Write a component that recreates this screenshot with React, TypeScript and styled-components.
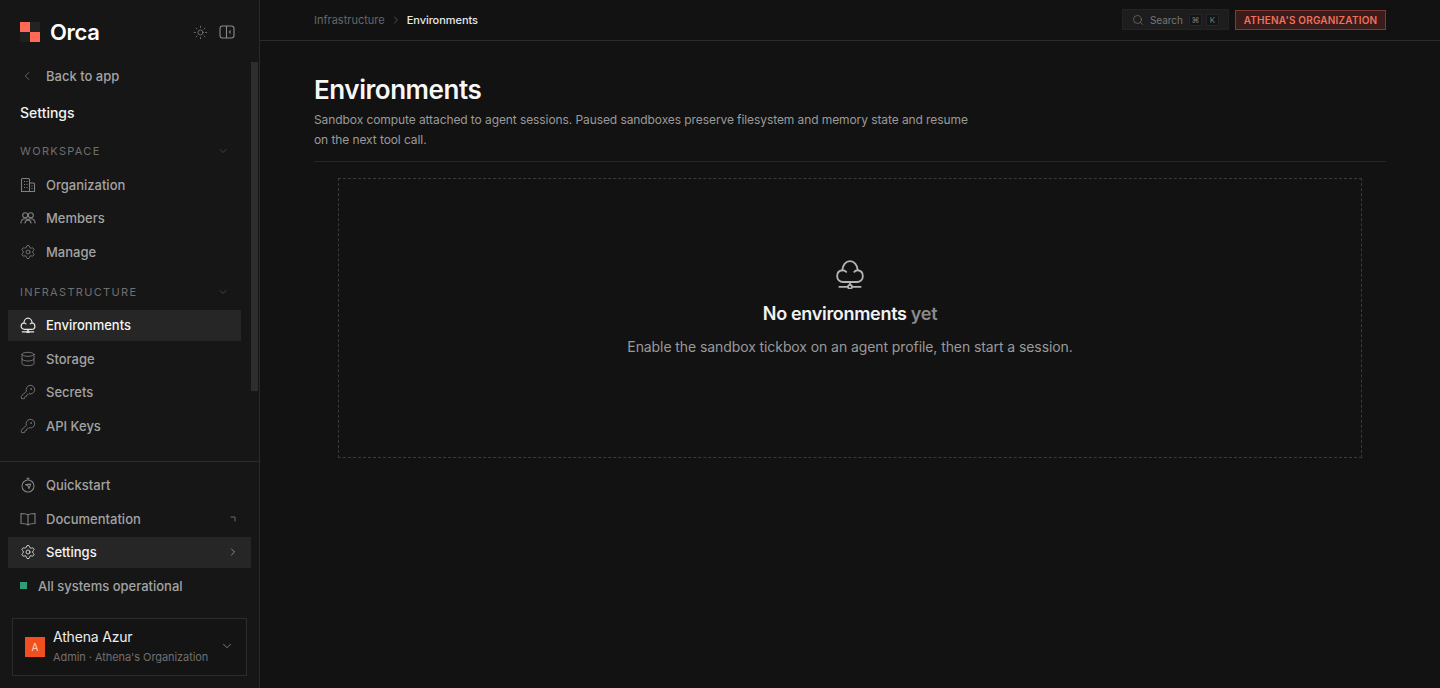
import React from 'react';
import styled, { createGlobalStyle } from 'styled-components';
import {
  ChevronDown,
  ChevronLeft,
  ChevronRight,
  Database,
  KeyRound,
  Search,
  Settings,
  Sun,
} from 'lucide-react';

const GlobalStyle = createGlobalStyle`
  html, body {
    margin: 0;
    padding: 0;
    height: 100%;
    background: #121212;
  }
  * {
    box-sizing: border-box;
  }
  body {
    font-family: Inter, "Liberation Sans", sans-serif;
    color: #fff;
    overflow: hidden;
  }
`;

const Page = styled.div`
  display: flex;
  width: 1440px;
  height: 688px;
  background: #121212;
`;

const Sidebar = styled.aside`
  position: relative;
  flex: 0 0 260px;
  height: 688px;
  display: flex;
  flex-direction: column;
  background: #161616;
  border-right: 1px solid #2a2a2a;
`;

const Scrollbar = styled.div`
  position: absolute;
  top: 62px;
  left: 251px;
  width: 7px;
  height: 329px;
  background: #2e2e2e;
`;

const BrandRow = styled.div`
  display: flex;
  align-items: center;
  height: 62px;
  padding: 2px 24px 0 20px;
`;

const BrandName = styled.span`
  margin-left: 10px;
  font-size: 22px;
  font-weight: 600;
  letter-spacing: -0.35px;
  color: #fff;
  flex: 1;
`;

const HeadIcons = styled.div`
  display: flex;
  align-items: center;
  gap: 11px;
  color: #8a8a8a;
`;

const TopNav = styled.div`
  flex: 1;
  display: flex;
  flex-direction: column;
`;

const BackRow = styled.div`
  display: flex;
  align-items: center;
  height: 28px;
  padding-left: 20px;
  gap: 12px;
  font-size: 13px;
  font-weight: 500;
  color: #a3a3a3;
  svg {
    color: #808080;
  }
`;

const SettingsTitle = styled.div`
  margin-top: 13px;
  padding-left: 20px;
  height: 20px;
  line-height: 20px;
  font-size: 14px;
  font-weight: 500;
  color: #f2f2f2;
`;

const SectionHead = styled.div<{ $top: number }>`
  display: flex;
  align-items: center;
  justify-content: space-between;
  height: 20px;
  width: 241px;
  margin-top: ${(p) => p.$top}px;
  margin-bottom: 8px;
  padding: 0 12px 0 20px;
  font-size: 11px;
  font-weight: 400;
  letter-spacing: 1.32px;
  color: #6f6f6f;
  svg {
    color: #5a5a5a;
  }
`;

const NavItem = styled.div<{ $active?: boolean; $wide?: boolean }>`
  display: flex;
  align-items: center;
  gap: 10px;
  width: ${(p) => (p.$wide ? 243 : 233)}px;
  height: 31px;
  margin: 0 0 2.5px 8px;
  padding: 0 12px;
  font-size: 13px;
  font-weight: 500;
  color: ${(p) => (p.$active ? '#f5f5f5' : '#a3a3a3')};
  background: ${(p) => (p.$active ? '#262626' : 'transparent')};
  svg.lead {
    flex: 0 0 16px;
    color: ${(p) => (p.$active ? '#e6e6e6' : '#808080')};
  }
`;

const ItemLabel = styled.span`
  flex: 1;
`;

const ExternalWrap = styled.span`
  display: flex;
  margin-right: 3px;
`;

const BottomNav = styled.div`
  border-top: 1px solid #2a2a2a;
  padding-top: 8px;
`;

const StatusRow = styled.div`
  display: flex;
  align-items: center;
  gap: 11px;
  height: 31px;
  padding-left: 20px;
  font-size: 13px;
  font-weight: 500;
  color: #a3a3a3;
`;

const StatusDot = styled.span`
  width: 7px;
  height: 7px;
  background: #2f9e78;
`;

const UserCard = styled.div`
  display: flex;
  align-items: center;
  width: 235px;
  height: 58px;
  margin: 17px 0 12px 12px;
  padding: 0 12px 2px 12px;
  border: 1px solid #2c2c2c;
  background: #141414;
`;

const Avatar = styled.div`
  display: flex;
  align-items: center;
  justify-content: center;
  flex: 0 0 20px;
  height: 20px;
  margin-top: 2px;
  background: #f0501f;
  font-size: 10px;
  color: #ffd9cc;
`;

const UserText = styled.div`
  flex: 1;
  margin-left: 8px;
  display: flex;
  flex-direction: column;
  gap: 5px;
`;

const UserName = styled.div`
  font-size: 14px;
  line-height: 17px;
  letter-spacing: -0.18px;
  color: #ededed;
`;

const UserMeta = styled.div`
  font-size: 11px;
  line-height: 14px;
  letter-spacing: -0.07px;
  color: #6f6f6f;
`;

const Main = styled.main`
  flex: 1;
  display: flex;
  flex-direction: column;
`;

const TopBar = styled.header`
  display: flex;
  align-items: center;
  height: 41px;
  padding: 0 54px;
  border-bottom: 1px solid #2a2a2a;
`;

const Crumbs = styled.div`
  flex: 1;
  display: flex;
  align-items: center;
  gap: 5px;
  font-size: 11px;
  color: #666;
  svg {
    color: #777;
  }
`;

const CrumbCurrent = styled.span`
  font-weight: 500;
  letter-spacing: -0.05px;
  color: #e8e8e8;
`;

const SearchBox = styled.div`
  display: flex;
  align-items: center;
  width: 107px;
  height: 21px;
  margin-bottom: 1px;
  padding: 0 9px 0 9px;
  background: #1d1d1d;
  border: 1px solid #232323;
  font-size: 10px;
  letter-spacing: -0.05px;
  color: #777;
  svg {
    color: #808080;
    margin-right: 6px;
  }
`;

const SearchLabel = styled.span`
  flex: 1;
`;

const Kbd = styled.span`
  display: flex;
  align-items: center;
  justify-content: center;
  width: 13px;
  height: 12px;
  margin-left: 4px;
  background: #141414;
  border: 1px solid #262626;
  font-size: 8px;
  color: #777;
`;

const OrgBadge = styled.div`
  display: flex;
  align-items: center;
  justify-content: center;
  width: 151px;
  height: 20px;
  margin-left: 6px;
  background: #3a1c1a;
  border: 1px solid #7e3b33;
  font-size: 10px;
  font-weight: 600;
  letter-spacing: 0.2px;
  color: #f0705c;
`;

const Content = styled.div`
  padding: 31px 54px 0;
`;

const PageHead = styled.div`
  padding-bottom: 12px;
  border-bottom: 1px solid #262626;
`;

const PageTitle = styled.h1`
  margin: 0;
  font-size: 26px;
  line-height: 36px;
  font-weight: 600;
  letter-spacing: -0.45px;
  color: #f7f7f7;
`;

const PageDesc = styled.p`
  margin: 2px 0 0;
  max-width: 670px;
  font-size: 12px;
  line-height: 19.5px;
  letter-spacing: -0.086px;
  color: #9a9a9a;
`;

const EmptyBox = styled.div`
  display: flex;
  flex-direction: column;
  align-items: center;
  width: 1024px;
  height: 280px;
  margin: 16px 0 0 24px;
  padding-top: 80px;
  border: 1px dashed #3a3a3a;
`;

const EmptyIcon = styled.div`
  display: flex;
  color: #b4b4b4;
`;

const EmptyTitle = styled.div`
  margin-top: 13px;
  font-size: 18px;
  line-height: 24px;
  font-weight: 600;
  letter-spacing: -0.31px;
  color: #f2f2f2;
`;

const Muted = styled.span`
  color: #8a8a8a;
`;

const EmptyText = styled.div`
  margin-top: 11px;
  font-size: 14px;
  line-height: 20px;
  letter-spacing: -0.086px;
  color: #9a9a9a;
`;

const Logo = () => (
  <svg width="20" height="20" viewBox="0 0 20 20">
    <rect x="0" y="0" width="10" height="10" fill="#ff6a55" />
    <rect x="10" y="0" width="10" height="10" fill="#232323" />
    <rect x="0" y="10" width="10" height="10" fill="#1f1f1f" />
    <rect x="10" y="10" width="10" height="10" fill="#ff6a55" />
  </svg>
);

const PanelIcon = () => (
  <svg width="16" height="16" viewBox="0 0 16 16" fill="none" stroke="currentColor" strokeWidth="1.1">
    <rect x="1" y="2" width="14" height="12" rx="2.5" />
    <path d="M7.500 2v12M11.500 6.500 10.500 8l1 1.500" />
  </svg>
);

const CloudIcon = ({ size = 16, width = 2.100 }: { size?: number; width?: number }) => (
  <svg className="lead" width={size} height={size} viewBox="0 0 28 28" fill="none" stroke="currentColor" strokeWidth={width} strokeLinecap="round" strokeLinejoin="round">
    <path d="M7.500 21.500C4.400 21.500 2 19 2 16C2 13 4 10.800 6.800 10.500C7 5.800 10 2 14 2C18 2 21 5.800 21.200 10.500C24 10.800 26 13 26 16C26 19 23.600 21.500 20.500 21.500Z" />
    <path d="M6.800 10.500C8.200 10.500 9.500 11 10.500 12M21.200 10.500C19.800 10.500 18.800 11 18 12" />
    <circle cx="14" cy="26" r="1.800" />
    <path d="M14 21.500v2.700M4 26h8.200M15.800 26H24" />
  </svg>
);

const BuildingIcon = () => (
  <svg className="lead" width="16" height="16" viewBox="0 0 16 16" fill="none" stroke="currentColor" strokeWidth="1.1">
    <path d="M1.500 14.500V2.500a1 1 0 0 1 1-1h6a1 1 0 0 1 1 1v12zM9.500 6h4a1 1 0 0 1 1 1v7.500h-5" />
    <path d="M4 4.500h1M6.500 4.500h1M4 7.500h1M6.500 7.500h1M4 10.500h1M6.500 10.500h1M11.500 9h1M11.500 11.500h1" />
  </svg>
);

const MembersIcon = () => (
  <svg className="lead" width="16" height="16" viewBox="0 0 16 16" fill="none" stroke="currentColor" strokeWidth="1.1" strokeLinecap="round">
    <circle cx="5.200" cy="5.200" r="2.500" />
    <circle cx="10.800" cy="5.200" r="2.500" />
    <path d="M1 13c0-2.600 1.600-4.300 4.200-4.300 1.200 0 2.200.4 2.800 1.100.6-.7 1.600-1.100 2.800-1.100C13.400 8.700 15 10.400 15 13M5 13c0-1.300.8-2.400 3-3.200 2.200.8 3 1.900 3 3.200" />
  </svg>
);

const QuickIcon = () => (
  <svg className="lead" width="16" height="16" viewBox="0 0 16 16" fill="none" stroke="currentColor" strokeWidth="1.1" strokeLinejoin="round">
    <circle cx="8" cy="9" r="6" />
    <path d="M6.500 1.300h3M8 1.300V3M5.500 7.500l5.200-.4-1.700 4.400-1.100-2.700z" />
  </svg>
);

const BookIcon = () => (
  <svg className="lead" width="16" height="16" viewBox="0 0 16 16" fill="none" stroke="currentColor" strokeWidth="1.1" strokeLinejoin="round">
    <path d="M8 4C6.800 3 5 2.500 1 2.500v10c4 0 5.800.5 7 1.500 1.200-1 3-1.500 7-1.500v-10C11 2.500 9.200 3 8 4zM8 4v10" />
  </svg>
);

const ExternalMark = () => (
  <svg width="6" height="6" viewBox="0 0 6 6" fill="none" stroke="#6a6a6a" strokeWidth="1">
    <path d="M0.500 1h4.500v4.500" />
  </svg>
);

const App: React.FC = () => {
  const leadProps = { className: 'lead', size: 16, strokeWidth: 1.25 };

  return (
    <Page>
      <GlobalStyle />
      <Sidebar>
        <Scrollbar />
        <BrandRow>
          <Logo />
          <BrandName>Orca</BrandName>
          <HeadIcons>
            <Sun size={15} strokeWidth={1.1} />
            <PanelIcon />
          </HeadIcons>
        </BrandRow>
        <TopNav>
          <BackRow>
            <ChevronLeft size={14} strokeWidth={1.25} />
            Back to app
          </BackRow>
          <SettingsTitle>Settings</SettingsTitle>
          <SectionHead $top={18}>
            WORKSPACE
            <ChevronDown size={12} strokeWidth={1.25} />
          </SectionHead>
          <NavItem>
            <BuildingIcon />
            <ItemLabel>Organization</ItemLabel>
          </NavItem>
          <NavItem>
            <MembersIcon />
            <ItemLabel>Members</ItemLabel>
          </NavItem>
          <NavItem>
            <Settings {...leadProps} />
            <ItemLabel>Manage</ItemLabel>
          </NavItem>
          <SectionHead $top={12}>
            INFRASTRUCTURE
            <ChevronDown size={12} strokeWidth={1.25} />
          </SectionHead>
          <NavItem $active>
            <CloudIcon />
            <ItemLabel>Environments</ItemLabel>
          </NavItem>
          <NavItem>
            <Database {...leadProps} />
            <ItemLabel>Storage</ItemLabel>
          </NavItem>
          <NavItem>
            <KeyRound {...leadProps} />
            <ItemLabel>Secrets</ItemLabel>
          </NavItem>
          <NavItem>
            <KeyRound {...leadProps} />
            <ItemLabel>API Keys</ItemLabel>
          </NavItem>
        </TopNav>
        <BottomNav>
          <NavItem $wide>
            <QuickIcon />
            <ItemLabel>Quickstart</ItemLabel>
          </NavItem>
          <NavItem $wide>
            <BookIcon />
            <ItemLabel>Documentation</ItemLabel>
            <ExternalWrap>
              <ExternalMark />
            </ExternalWrap>
          </NavItem>
          <NavItem $wide $active>
            <Settings {...leadProps} />
            <ItemLabel>Settings</ItemLabel>
            <ChevronRight size={12} color="#8a8a8a" />
          </NavItem>
          <StatusRow>
            <StatusDot />
            All systems operational
          </StatusRow>
          <UserCard>
            <Avatar>A</Avatar>
            <UserText>
              <UserName>Athena Azur</UserName>
              <UserMeta>Admin · Athena's Organization</UserMeta>
            </UserText>
            <ChevronDown size={14} strokeWidth={1.25} color="#a0a0a0" />
          </UserCard>
        </BottomNav>
      </Sidebar>
      <Main>
        <TopBar>
          <Crumbs>
            Infrastructure
            <ChevronRight size={12} strokeWidth={1.25} />
            <CrumbCurrent>Environments</CrumbCurrent>
          </Crumbs>
          <SearchBox>
            <Search size={12} strokeWidth={1.25} />
            <SearchLabel>Search</SearchLabel>
            <Kbd>⌘</Kbd>
            <Kbd>K</Kbd>
          </SearchBox>
          <OrgBadge>ATHENA'S ORGANIZATION</OrgBadge>
        </TopBar>
        <Content>
          <PageHead>
            <PageTitle>Environments</PageTitle>
            <PageDesc>
              Sandbox compute attached to agent sessions. Paused sandboxes preserve filesystem and memory state and resume on the next tool call.
            </PageDesc>
          </PageHead>
          <EmptyBox>
            <EmptyIcon>
              <CloudIcon size={30} width={1.7} />
            </EmptyIcon>
            <EmptyTitle>
              No environments <Muted>yet</Muted>
            </EmptyTitle>
            <EmptyText>Enable the sandbox tickbox on an agent profile, then start a session.</EmptyText>
          </EmptyBox>
        </Content>
      </Main>
    </Page>
  );
};

export default App;
